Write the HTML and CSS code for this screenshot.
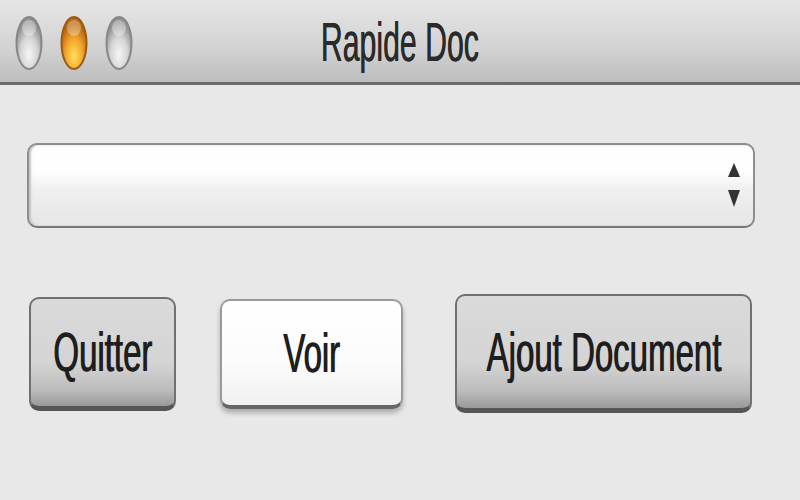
FILE: index.html
```html
<!DOCTYPE html>
<html lang="fr">
<head>
  <meta charset="UTF-8">
  <meta name="viewport" content="width=device-width, initial-scale=1.0">
  <title>Rapide Doc</title>
  <link rel="stylesheet" href="styles.css">
</head>
<body>
  <div class="window">
    <header class="titlebar">
      <div class="lights">
        <svg class="light" viewBox="0 0 28 56" width="28" height="56">
          <defs>
            <radialGradient id="gray" cx="50%" cy="72%" r="62%">
              <stop offset="0" stop-color="#f6f6f6"/>
              <stop offset="0.55" stop-color="#d4d4d4"/>
              <stop offset="1" stop-color="#8e8e8e"/>
            </radialGradient>
            <radialGradient id="amber" cx="50%" cy="75%" r="62%">
              <stop offset="0" stop-color="#ffe060"/>
              <stop offset="0.55" stop-color="#f2a52a"/>
              <stop offset="1" stop-color="#b8650e"/>
            </radialGradient>
          </defs>
          <ellipse cx="14" cy="28" rx="12.5" ry="26" fill="url(#gray)" stroke="#888" stroke-width="2"/>
          <ellipse cx="14" cy="13" rx="7" ry="8" fill="#fff" opacity="0.35"/>
        </svg>
        <svg class="light" viewBox="0 0 28 56" width="28" height="56">
          <ellipse cx="14" cy="28" rx="12.5" ry="26" fill="url(#amber)" stroke="#9c5c10" stroke-width="2"/>
          <ellipse cx="14" cy="13" rx="7" ry="8" fill="#fff" opacity="0.3"/>
        </svg>
        <svg class="light" viewBox="0 0 28 56" width="28" height="56">
          <ellipse cx="14" cy="28" rx="12.5" ry="26" fill="url(#gray)" stroke="#888" stroke-width="2"/>
          <ellipse cx="14" cy="13" rx="7" ry="8" fill="#fff" opacity="0.35"/>
        </svg>
      </div>
      <h1 class="title"><span class="narrow">Rapide Doc</span></h1>
      <div></div>
    </header>

    <main class="content">
      <div class="select">
        <svg class="arrows" viewBox="0 0 14 46" width="14" height="46">
          <path d="M7 0 L13 14 L1 14 Z" fill="#333"/>
          <path d="M1 27 L13 27 L7 44 Z" fill="#333"/>
        </svg>
      </div>

      <div class="buttons">
        <button class="btn btn-quit"><span class="narrow wide">Quitter</span></button>
        <button class="btn btn-default"><span class="narrow wide">Voir</span></button>
        <button class="btn btn-add"><span class="narrow wide">Ajout Document</span></button>
      </div>
    </main>
  </div>
</body>
</html>
```

FILE: styles.css
```css
body {
  margin: 0;
  background: #e8e8e8;
  font-family: "Liberation Sans", Arial, sans-serif;
  color: #1c1c1c;
}

.window {
  width: 800px;
  height: 500px;
  overflow: hidden;
}

.titlebar {
  height: 82px;
  display: grid;
  grid-template-columns: 1fr auto 1fr;
  align-items: center;
  background: linear-gradient(#e6e6e6, #d2d2d2 60%, #bdbdbd);
  border-bottom: 3px solid #6a6a6a;
}

.lights {
  display: flex;
  gap: 17px;
  padding-left: 15px;
  margin-top: 4px;
}

.title {
  margin: 0;
  margin-top: 2px;
  font-size: 55px;
  font-weight: normal;
  color: #2a2a2a;
  text-align: center;
  text-shadow: 0.7px 0 0 #2a2a2a;
}

.narrow {
  display: inline-block;
  transform: scaleX(0.55);
  white-space: nowrap;
}

.narrow.wide {
  transform: scaleX(0.6);
}

.content {
  padding: 58px 45px 0 27px;
}

.select {
  height: 81px;
  border: 2px solid #8e8e8e;
  border-bottom-color: #777;
  border-radius: 10px;
  background: linear-gradient(#ffffff, #fdfdfd 35%, #efefef 55%, #e6e6e6);
  box-shadow: inset 2px 0 2px #c4c4c4;
  display: flex;
  align-items: center;
  justify-content: flex-end;
  padding-right: 12px;
}

.buttons {
  display: flex;
  align-items: center;
  margin-top: 66px;
  padding-left: 2px;
}

.btn {
  display: flex;
  align-items: center;
  justify-content: center;
  font-family: "Liberation Sans", Arial, sans-serif;
  font-size: 55px;
  color: #1e1e1e;
  border-radius: 10px;
  padding: 0;
  margin-right: 44px;
  text-shadow: 1.3px 0 0 #1e1e1e;
}

.btn-quit {
  width: 147px;
  height: 114px;
  border: 2px solid #707070;
  border-bottom: 5px solid #555;
  background: linear-gradient(#dadada, #d4d4d4 60%, #bcbcbc 85%, #999);
}

.btn-default {
  width: 183px;
  height: 110px;
  border: 2px solid #9a9a9a;
  border-bottom: 4px solid #666;
  background: linear-gradient(#ffffff, #fbfbfb 60%, #f0f0f0);
  box-shadow: 0 4px 5px rgba(0, 0, 0, 0.25);
  margin-right: 52px;
}

.btn-add {
  width: 297px;
  height: 119px;
  border: 2px solid #707070;
  border-bottom: 5px solid #555;
  background: linear-gradient(#dadada, #d4d4d4 60%, #bcbcbc 85%, #999);
  margin-right: 0;
}
```
